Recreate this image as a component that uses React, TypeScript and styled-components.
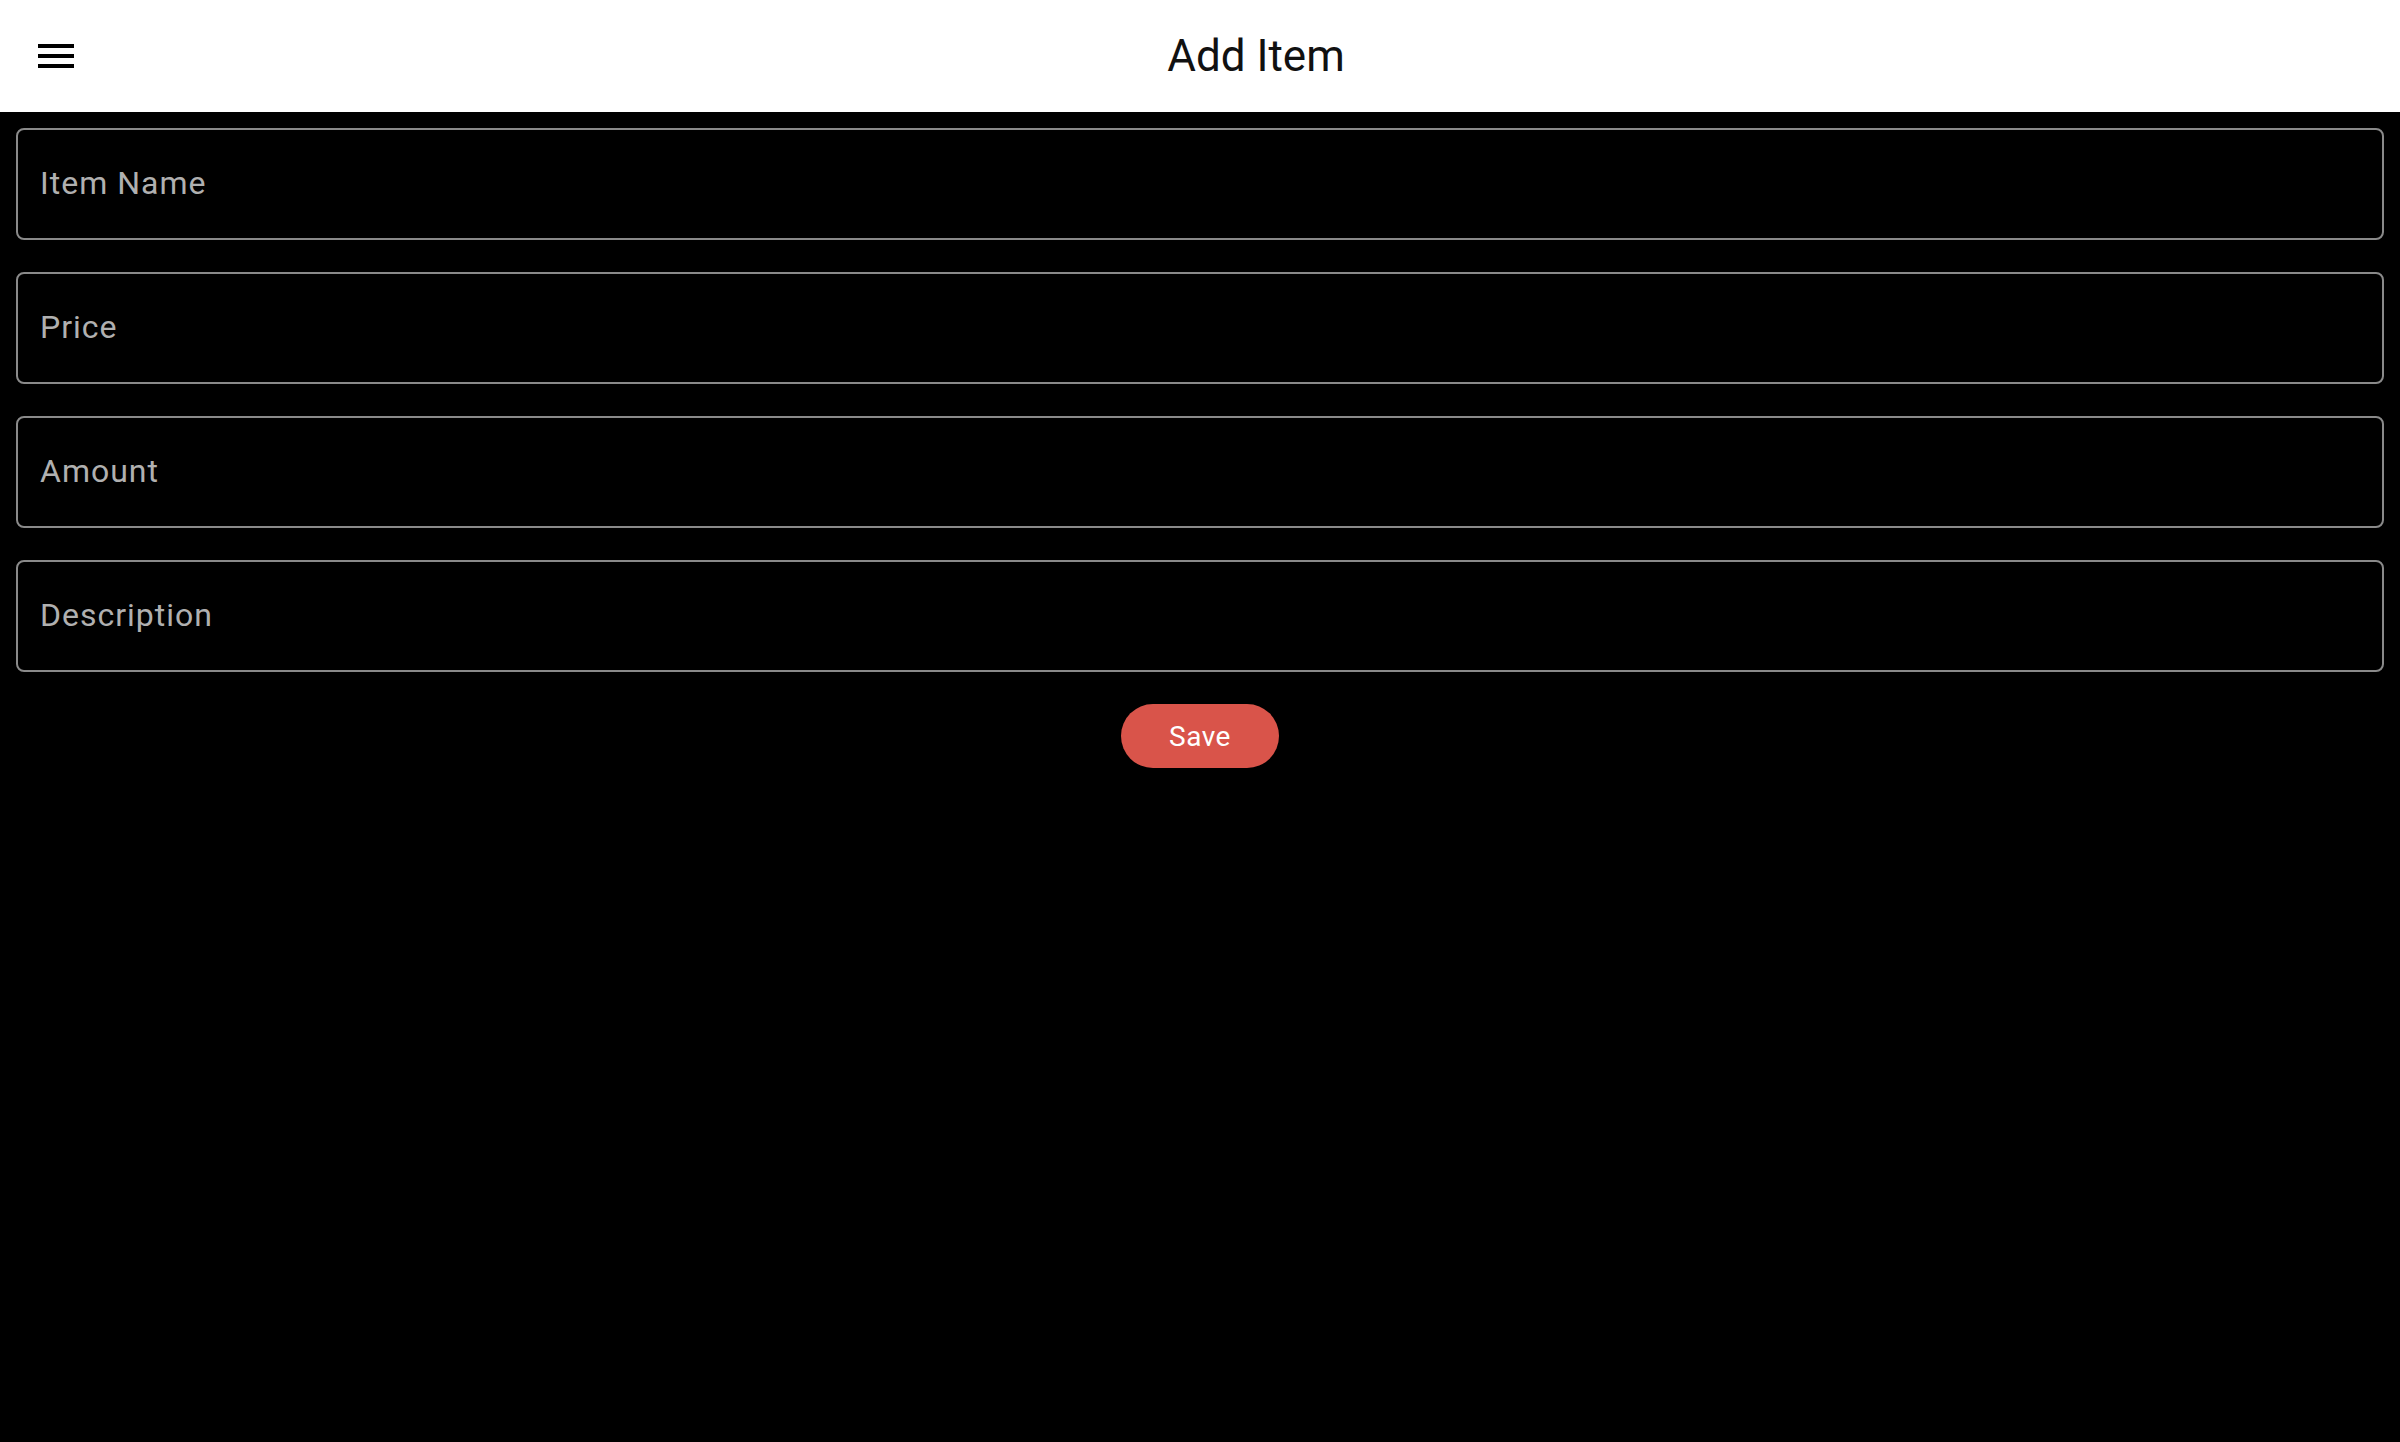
import React from "react";
import styled, { createGlobalStyle } from "styled-components";

const GlobalStyle = createGlobalStyle`
  html, body {
    margin: 0;
    padding: 0;
    background: #000000;
  }
  body {
    font-family: Roboto, "Liberation Sans", sans-serif;
  }
  * { box-sizing: border-box; }
`;

const Page = styled.div`
  min-height: 100vh;
  background: #000000;
  display: flex;
  flex-direction: column;
`;

const AppBar = styled.header`
  height: 112px;
  background: #ffffff;
  display: flex;
  align-items: center;
`;

const Leading = styled.button`
  width: 112px;
  height: 112px;
  border: none;
  background: transparent;
  padding: 0;
  display: flex;
  align-items: center;
  justify-content: center;
  cursor: pointer;
`;

const Title = styled.h1`
  flex: 1;
  margin: 0;
  text-align: center;
  font-family: Roboto, "Liberation Sans", sans-serif;
  font-weight: 400;
  font-size: 44px;
  color: #111111;
  letter-spacing: 0;
`;

const Form = styled.form`
  display: flex;
  flex-direction: column;
  gap: 32px;
  padding: 16px 16px 0;
`;

const Field = styled.input`
  height: 112px;
  width: 100%;
  background: #000000;
  border: 2px solid #8a8a8a;
  border-radius: 8px;
  padding: 0 22px 3px;
  font-family: Roboto, "Liberation Sans", sans-serif;
  font-size: 32px;
  letter-spacing: 1px;
  color: #e0e0e0;
  outline: none;
  &::placeholder {
    color: #b0b0b0;
  }
`;

const Actions = styled.div`
  display: flex;
  justify-content: center;
`;

const SaveButton = styled.button`
  width: 158px;
  height: 64px;
  border: none;
  border-radius: 32px;
  background: #d9544a;
  color: #ffffff;
  font-family: Roboto, "Liberation Sans", sans-serif;
  font-weight: 400;
  font-size: 28px;
  letter-spacing: 0.5px;
  cursor: pointer;
`;

const MenuIcon = () => (
  <svg width="48" height="48" viewBox="0 0 24 24" aria-hidden="true">
    <path d="M3 18h18v-2H3v2zm0-5h18v-2H3v2zm0-7v2h18V6H3z" fill="#000000" />
  </svg>
);

const fields = ["Item Name", "Price", "Amount", "Description"];

export default function App() {
  return (
    <>
      <GlobalStyle />
      <Page>
        <AppBar>
          <Leading type="button" aria-label="Menu">
            <MenuIcon />
          </Leading>
          <Title>Add Item</Title>
        </AppBar>
        <Form onSubmit={(e) => e.preventDefault()}>
          {fields.map((f) => (
            <Field key={f} placeholder={f} />
          ))}
          <Actions>
            <SaveButton type="submit">Save</SaveButton>
          </Actions>
        </Form>
      </Page>
    </>
  );
}
